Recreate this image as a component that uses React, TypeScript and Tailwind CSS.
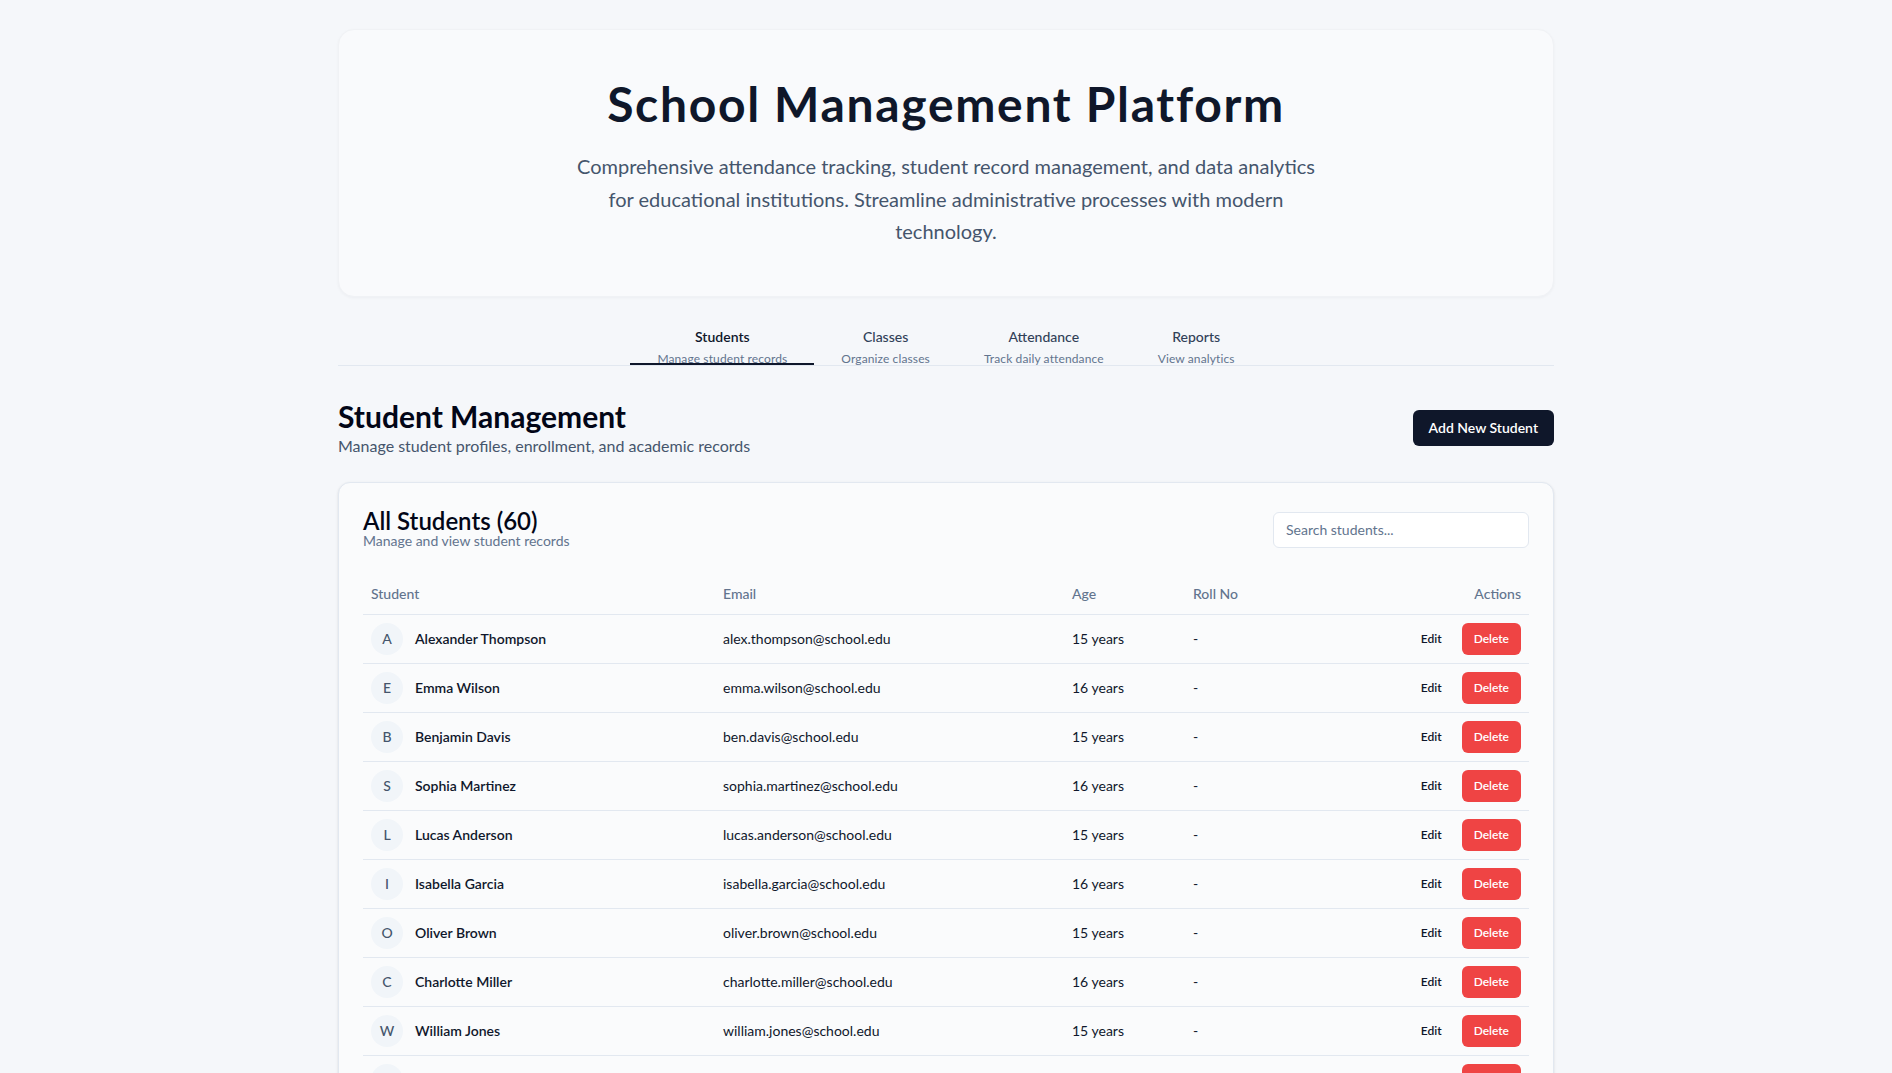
import React from "react";

type Student = { name: string; email: string; age: number };

const students: Student[] = [
  { name: "Alexander Thompson", email: "alex.thompson@school.edu", age: 15 },
  { name: "Emma Wilson", email: "emma.wilson@school.edu", age: 16 },
  { name: "Benjamin Davis", email: "ben.davis@school.edu", age: 15 },
  { name: "Sophia Martinez", email: "sophia.martinez@school.edu", age: 16 },
  { name: "Lucas Anderson", email: "lucas.anderson@school.edu", age: 15 },
  { name: "Isabella Garcia", email: "isabella.garcia@school.edu", age: 16 },
  { name: "Oliver Brown", email: "oliver.brown@school.edu", age: 15 },
  { name: "Charlotte Miller", email: "charlotte.miller@school.edu", age: 16 },
  { name: "William Jones", email: "william.jones@school.edu", age: 15 },
  { name: "Ava Taylor", email: "ava.taylor@school.edu", age: 16 },
  { name: "Mason White", email: "mason.white@school.edu", age: 15 },
  { name: "Mia Harris", email: "mia.harris@school.edu", age: 16 },
  { name: "Ethan Clark", email: "ethan.clark@school.edu", age: 15 },
];

const tabs = [
  { label: "Students", sub: "Manage student records", active: true },
  { label: "Classes", sub: "Organize classes", active: false },
  { label: "Attendance", sub: "Track daily attendance", active: false },
  { label: "Reports", sub: "View analytics", active: false },
];

export default function App() {
  return (
    <div className="min-h-screen bg-[#f5f7fa] font-['Lato','Noto_Sans',sans-serif] text-slate-900">
      <div className="max-w-7xl mx-auto px-8 pt-[29px] pb-10">
        {/* Hero */}
        <div className="rounded-2xl bg-[#f9fafc] border border-[#f0f2f5] shadow-[0_1px_3px_rgba(15,23,42,0.04)] py-12 px-8 text-center">
          <h1 className="pt-0.5 text-5xl font-bold leading-none tracking-[0.035em] text-[#0f172a]">
            School Management Platform
          </h1>
          <p className="mt-[22px] max-w-3xl mx-auto text-xl leading-[32.5px] text-slate-600">
            Comprehensive attendance tracking, student record management, and data analytics for educational
            institutions. Streamline administrative processes with modern technology.
          </p>
        </div>

        {/* Tabs */}
        <div className="mt-[30px] flex justify-center border-b border-slate-200">
          {tabs.map((t) => (
            <button key={t.label} className="relative flex flex-col items-center px-[27px]">
              <span
                className={
                  t.active
                    ? "text-sm leading-5 font-semibold text-slate-900"
                    : "text-sm leading-5 font-medium text-slate-700"
                }
              >
                {t.label}
              </span>
              <span className="mt-1 -mb-0.5 text-xs leading-4 tracking-[0.01em] text-slate-500">{t.sub}</span>
              {t.active && <span className="absolute left-0 right-0 bottom-0 h-0.5 bg-slate-900" />}
            </button>
          ))}
        </div>

        {/* Section header */}
        <div className="mt-8 flex items-center justify-between">
          <div>
            <h2 className="text-3xl leading-9 font-bold text-[#020617]">Student Management</h2>
            <p className="text-base leading-6 text-slate-600">Manage student profiles, enrollment, and academic records</p>
          </div>
          <button className="h-9 px-4 rounded-md bg-[#0f172a] text-white text-sm font-semibold">Add New Student</button>
        </div>

        {/* Card */}
        <div className="mt-6 rounded-xl border border-slate-200 bg-[#fafbfc] shadow-sm">
          <div className="flex items-center justify-between px-6 pt-[26px] pb-6">
            <div>
              <h3 className="text-2xl font-semibold leading-none text-[#020617]">All Students (60)</h3>
              <p className="-mt-0.5 text-sm leading-5 text-slate-500">Manage and view student records</p>
            </div>
            <input
              placeholder="Search students..."
              className="h-9 w-64 rounded-md border border-slate-200 bg-white px-3 text-sm placeholder:text-slate-500 outline-none"
            />
          </div>
          <div className="px-6 pb-6">
            <table className="w-full text-sm table-fixed">
              <thead>
                <tr className="border-b border-slate-200">
                  <th className="h-10 px-2 text-left font-medium text-slate-500 w-[352px]">Student</th>
                  <th className="h-10 px-2 text-left font-medium text-slate-500 w-[349px]">Email</th>
                  <th className="h-10 px-2 text-left font-medium text-slate-500 w-[121px]">Age</th>
                  <th className="h-10 px-2 text-left font-medium text-slate-500">Roll No</th>
                  <th className="h-10 px-2 text-right font-medium text-slate-500 w-[160px]">Actions</th>
                </tr>
              </thead>
              <tbody>
                {students.map((s) => (
                  <tr key={s.email} className="border-b border-slate-200">
                    <td className="p-2">
                      <div className="flex items-center gap-3">
                        <div className="w-8 h-8 rounded-full bg-slate-100 flex items-center justify-center text-sm font-medium text-slate-600">
                          {s.name[0]}
                        </div>
                        <span className="font-semibold text-slate-900">{s.name}</span>
                      </div>
                    </td>
                    <td className="p-2 text-slate-900">{s.email}</td>
                    <td className="p-2 text-slate-900">{s.age} years</td>
                    <td className="p-2 text-slate-900">-</td>
                    <td className="p-2">
                      <div className="flex justify-end items-center gap-2">
                        <button className="h-8 px-3 rounded-md text-xs font-semibold text-slate-900">Edit</button>
                        <button className="h-8 px-3 rounded-md bg-[#ef4444] text-white text-xs font-semibold">Delete</button>
                      </div>
                    </td>
                  </tr>
                ))}
              </tbody>
            </table>
          </div>
        </div>
      </div>
    </div>
  );
}
